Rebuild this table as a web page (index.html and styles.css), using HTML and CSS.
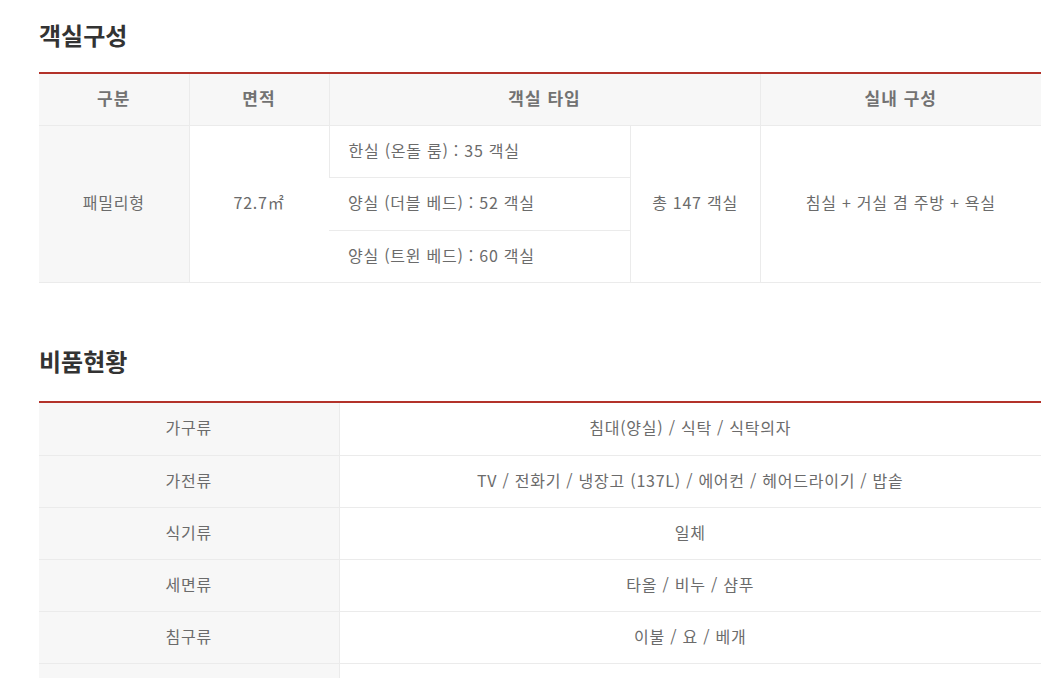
FILE: index.html
```html
<!DOCTYPE html>
<html lang="ko">
<head>
<meta charset="utf-8">
<title>객실구성</title>
<link rel="stylesheet" href="styles.css">
</head>
<body>
<div class="wrap">
  <section class="sec sec-rooms">
    <h2 class="title">객실구성</h2>
    <table class="tbl">
      <colgroup>
        <col style="width:150px">
        <col style="width:140px">
        <col style="width:301px">
        <col style="width:130px">
        <col>
      </colgroup>
      <thead>
        <tr>
          <th>구분</th>
          <th>면적</th>
          <th colspan="2">객실 타입</th>
          <th>실내 구성</th>
        </tr>
      </thead>
      <tbody>
        <tr>
          <td rowspan="3" class="gray">패밀리형</td>
          <td rowspan="3">72.7㎡</td>
          <td class="left">한실 (온돌 룸) : 35 객실</td>
          <td rowspan="3">총 147 객실</td>
          <td rowspan="3">침실 + 거실 겸 주방 + 욕실</td>
        </tr>
        <tr class="tall">
          <td class="left">양실 (더블 베드) : 52 객실</td>
        </tr>
        <tr>
          <td class="left">양실 (트윈 베드) : 60 객실</td>
        </tr>
      </tbody>
    </table>
  </section>

  <section class="sec sec-items">
    <h2 class="title">비품현황</h2>
    <table class="tbl">
      <colgroup>
        <col style="width:300px">
        <col>
      </colgroup>
      <tbody>
        <tr class="tall"><td class="gray">가구류</td><td>침대(양실) / 식탁 / 식탁의자</td></tr>
        <tr><td class="gray">가전류</td><td>TV / 전화기 / 냉장고 (137L) / 에어컨 / 헤어드라이기 / 밥솥</td></tr>
        <tr><td class="gray">식기류</td><td>일체</td></tr>
        <tr><td class="gray">세면류</td><td>타올 / 비누 / 샴푸</td></tr>
        <tr><td class="gray">침구류</td><td>이불 / 요 / 베개</td></tr>
        <tr><td class="gray">&nbsp;</td><td>&nbsp;</td></tr>
      </tbody>
    </table>
  </section>
</div>
</body>
</html>
```

FILE: styles.css
```css
html, body {
  margin: 0;
  padding: 0;
  background: #fff;
}
body {
  font-family: "Noto Sans CJK KR", "Noto Sans", sans-serif;
  color: #666;
}
.wrap {
  width: 1002px;
  padding-left: 39px;
}
.sec-rooms {
  padding-top: 20px;
}
.sec-items {
  padding-top: 63px;
}
.title {
  margin: 0 0 22px 0;
  font-size: 24px;
  line-height: 30px;
  font-weight: 700;
  color: #333;
}
.sec-items .title {
  margin-bottom: 25px;
}
.tbl {
  width: 1002px;
  border-collapse: collapse;
  table-layout: fixed;
  border-top: 2px solid #b3322a;
}
.tbl th,
.tbl td {
  height: 47px;
  padding: 0 0 4px 0;
  text-align: center;
  vertical-align: middle;
  border-bottom: 1px solid #ebebeb;
  border-left: 1px solid #ebebeb;
  font-size: 16px;
  line-height: 20px;
  letter-spacing: 0.75px;
  color: #6b6b6b;
}
.tbl th:first-child,
.tbl tr > td:first-child {
  border-left: none;
}
.tbl th {
  background: #f7f7f7;
  font-size: 17px;
  letter-spacing: 1px;
  font-weight: 700;
  color: #727272;
}
.tbl td.gray {
  background: #f7f7f7;
}
.tbl td.left {
  text-align: left;
  padding-left: 19px;
  border-left: 1px solid #ebebeb;
}
.tbl tr.tall td {
  height: 48px;
}
```
